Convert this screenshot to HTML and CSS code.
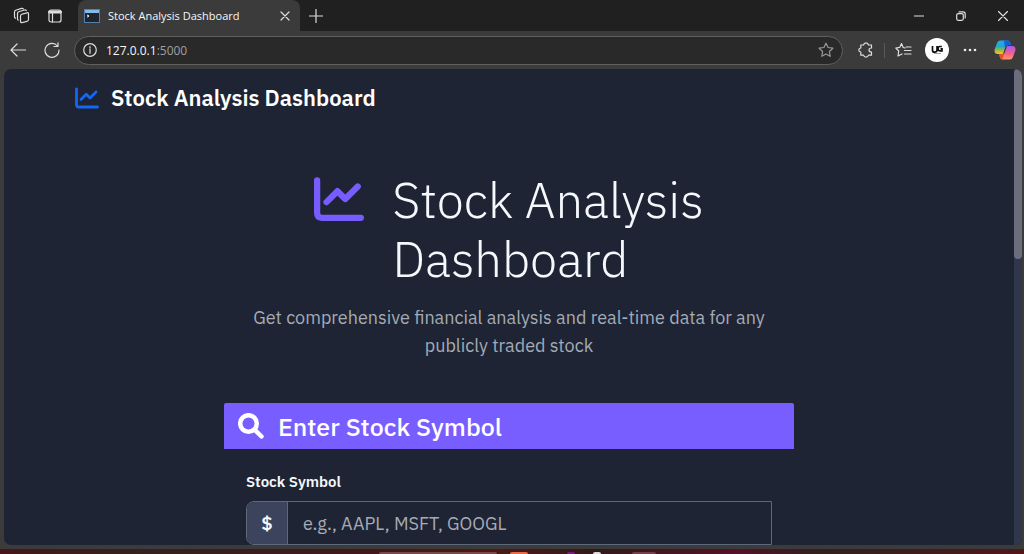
FILE: index.html
```html
<!DOCTYPE html>
<html lang="en">
<head>
<meta charset="utf-8">
<meta name="viewport" content="width=device-width, initial-scale=1">
<title>Stock Analysis Dashboard</title>
<link rel="stylesheet" href="styles.css">
</head>
<body>
<div class="browser">
  <div class="titlebar">
    <div class="title-actions">
      <button class="icon-btn" aria-label="Workspaces"><svg width="18" height="18" viewBox="0 0 18 18"><rect x="7.500" y="6.500" width="8" height="8.500" rx="1.500" transform="skewY(-14) translate(0 2.800)"/><path d="M5.200 13.200Q4.500 12.800 4.500 11.800V6.500Q4.500 5.200 5.700 4.800L11.500 3Q12.800 2.700 13.300 3.600M2.500 11.300Q1.500 10.800 1.500 9.800V5Q1.500 3.700 2.700 3.300L8.500 1.400Q9.700 1.100 10.300 1.900"/></svg></button>
      <button class="icon-btn" aria-label="Tab actions"><svg width="16" height="16" viewBox="0 0 16 16"><rect x="2" y="2" width="12" height="12" rx="2"/><path d="M2.500 4H13.500" stroke-width="3"/><path d="M5.500 5V14"/></svg></button>
    </div>
    <div class="tab">
      <svg class="favicon" width="16" height="14" viewBox="0 0 16 14"><rect x=".5" y=".5" width="15" height="13" fill="#20252d" stroke="#547eae"/><path d="M1 2.500H15" stroke="#84b9e9" stroke-width="3"/><path d="m3 6 2 1-2 1.200" stroke="#fff"/></svg>
      <span class="tab-title">Stock Analysis Dashboard</span>
      <button class="icon-btn" aria-label="Close tab"><svg width="10" height="10" viewBox="0 0 10 10"><path d="m1 1 8 8M9 1 1 9"/></svg></button>
    </div>
    <button class="icon-btn new-tab" aria-label="New tab"><svg width="14" height="14" viewBox="0 0 14 14"><path d="M7 .5V13.500M.5 7H13.500"/></svg></button>
    <div class="window-actions">
      <button class="icon-btn" aria-label="Minimize"><svg width="10" height="10" viewBox="0 0 10 10"><path d="M0 5H10"/></svg></button>
      <button class="icon-btn" aria-label="Restore"><svg width="10" height="10" viewBox="0 0 10 10"><rect x=".7" y="2.700" width="6.600" height="6.600" rx="1.500"/><path d="M3 .8H7Q9.200.8 9.200 3V7"/></svg></button>
      <button class="icon-btn" aria-label="Close"><svg width="10" height="10" viewBox="0 0 10 10"><path d="m.5.5 9 9M9.500.5l-9 9"/></svg></button>
    </div>
  </div>
  <div class="toolbar">
    <button class="icon-btn back" aria-label="Back"><svg width="16" height="14" viewBox="0 0 16 14"><path d="M15.500 7H1M7 1 1 7l6 6"/></svg></button>
    <button class="icon-btn reload" aria-label="Reload"><svg width="16" height="16" viewBox="0 0 16 16"><path d="M13.500 4A7 7 0 1 0 15 8M14 .8V4.500H10"/></svg></button>
    <div class="address">
      <svg width="14" height="14" viewBox="0 0 14 14"><circle cx="7" cy="7" r="6.300"/><path d="M7 6V10.300M7 3.500V4.800"/></svg>
      <span class="url">127.0.0.1<span class="port">:5000</span></span>
      <button class="icon-btn star" aria-label="Add to favorites"><svg width="16" height="16" viewBox="0 0 16 16"><path d="m8 1.200 2.100 4.300 4.800.7-3.500 3.300.8 4.800L8 12l-4.200 2.300.8-4.800L1.100 6.200l4.800-.7z"/></svg></button>
    </div>
    <button class="icon-btn ext" aria-label="Extensions"><svg width="16" height="16" viewBox="0 0 16 16"><path d="M5.500 3Q6 .8 8 .8T10.500 3H13.500V6Q11 6 11 8T13.500 10V13.200H10.500Q10 15.200 8 15.200T5.500 13.200H2.800V10Q.8 9.800.8 8T2.800 6V3Z"/></svg></button>
    <span class="divider"></span>
    <button class="icon-btn" aria-label="Favorites"><svg width="17" height="16" viewBox="0 0 17 16"><path d="m10 6-1.800-.5L6.500 1.500 4.800 5.300.8 6l2.900 3-.7 5L7 12M11 5h5M9.500 8.500H16M9.500 12H16"/></svg></button>
    <button class="profile" aria-label="Profile"><svg width="24" height="24" viewBox="0 0 24 24"><path d="M7.500 8v4.200q0 2 2.200 2 2.300 0 2.300-2.200V8M16.800 8.500h-2q-1.700 0-1.700 2.200t1.900 2.200h2v-2h-1.500" fill="none" stroke="#111" stroke-width="1.700"/><path d="M9 15.500h7" stroke="#777" stroke-width=".7"/></svg></button>
    <button class="icon-btn" aria-label="Settings and more"><svg width="14" height="4" viewBox="0 0 14 4"><g fill="#eee" stroke="none"><circle cx="2" cy="2" r="1.300"/><circle cx="7" cy="2" r="1.300"/><circle cx="12" cy="2" r="1.300"/></g></svg></button>
    <button class="icon-btn" aria-label="Copilot"><svg width="22" height="20" viewBox="0 0 22 20">
      <defs>
        <linearGradient id="cool" x1="0" y1="0" x2="0" y2="1"><stop offset="0" stop-color="#2aa5ee"/><stop offset=".45" stop-color="#23a9c8"/><stop offset=".75" stop-color="#a5bd32"/><stop offset="1" stop-color="#ffc51d"/></linearGradient>
        <linearGradient id="warm" x1="0" y1="0" x2="0" y2="1"><stop offset="0" stop-color="#a45df0"/><stop offset=".5" stop-color="#f05b9c"/><stop offset="1" stop-color="#ff9854"/></linearGradient>
      </defs>
      <g stroke="none"><path d="M6 .5H13.500Q16 .5 17 5H14Q12 5 11 8L9 14H4Q-.5 14 .8 9L3 3Q4 .5 6 .5Z" fill="url(#cool)"/><path d="M10 .5H13.500Q16 .5 17 5H14Q12 5 11 8Z" fill="#145ddb"/><path d="M16 19.500H8.500Q6 19.500 5.500 15H8Q10 15 11 12L13 6H18Q22.500 6 21.200 11L19 17Q18 19.500 16 19.500Z" fill="url(#warm)"/><path d="M5 14H8Q9.500 14 10 13L8.500 19.500Q6 19.500 5 14Z" fill="#e65025"/></g></svg></button>
  </div>
  <div class="viewport">
    <div class="page">
      <nav class="navbar">
        <a class="brand" href="#"><svg class="chart" width="24" height="24" viewBox="0 0 512 512"><path d="M32 64V400q0 48 48 48H480M128 288l112-112 80 80L448 128"/></svg>Stock Analysis Dashboard</a>
      </nav>
      <main class="main">
        <header class="hero">
          <svg class="chart hero-icon" width="50" height="50" viewBox="0 0 512 512"><path d="M32 64V400q0 48 48 48H480M128 288l112-112 80 80L448 128"/></svg>
          <h1>Stock Analysis<br>Dashboard</h1>
        </header>
        <p class="lead">Get comprehensive financial analysis and real-time data for any publicly traded stock</p>
        <section class="card">
          <h2 class="card-header"><svg width="26" height="26" viewBox="0 0 26 26"><circle cx="10.500" cy="10.500" r="8.300"/><path d="m16.500 16.500 7 7"/></svg>Enter Stock Symbol</h2>
          <form class="card-body">
            <label for="symbol">Stock Symbol</label>
            <div class="input-group">
              <span class="prefix">$</span>
              <input id="symbol" type="text" placeholder="e.g., AAPL, MSFT, GOOGL">
            </div>
          </form>
        </section>
      </main>
    </div>
    <div class="scrollbar"><div class="thumb"></div></div>
  </div>
  <div class="taskbar"><span class="search-edge"></span><span class="app orange"></span><span class="app purple"></span><span class="app white"></span><span class="app maroon"></span></div>
</div>
</body>
</html>
```
FILE: styles.css
```css
* { box-sizing: border-box; }
body { margin: 0; background: #3b3b3b; color: #f5f8fc; font-family: "IBM Plex Sans", "Noto Sans", sans-serif; }
button { padding: 0; border: 0; background: none; color: inherit; font: inherit; }
svg { display: block; flex: none; }
.browser { display: flex; flex-direction: column; height: 100vh; overflow: hidden; }

.titlebar, .toolbar { display: flex; align-items: center; flex: none; }
.titlebar { height: 31px; background: #202020; }
.toolbar { height: 38px; padding: 0 8px 0 10px; }
.icon-btn { display: grid; place-items: center; flex: none; }
.icon-btn svg, .address > svg { fill: none; stroke: #dedede; stroke-width: 1.2; stroke-linecap: round; stroke-linejoin: round; }
.title-actions { display: flex; gap: 16px; align-items: center; width: 78px; padding-left: 13px; }
.tab { display: flex; align-items: center; width: 222px; height: 31px; padding: 0 10px 0 6px; border-radius: 8px 8px 0 0; background: #3b3b3b; }
.tab-title { flex: 1; margin-left: 8px; font: 11px "Open Sans", sans-serif; white-space: nowrap; }
.new-tab { margin-left: 9px; }
.window-actions { display: flex; gap: 32px; margin-left: auto; padding-right: 16px; }

.reload { margin-left: 18px; }
.address { display: flex; align-items: center; flex: 1; height: 29px; margin: 0 15px 0 14px; padding: 0 8px 0 8px; border: 1px solid #606060; border-radius: 15px; background: #292929; }
.url { flex: 1; margin-left: 9px; font: 12px "Open Sans", sans-serif; }
.port { color: #a0a0a0; }
.star svg { stroke: #999; }
.divider { width: 1px; height: 15px; margin: 0 10px; background: #605653; }
.profile { width: 24px; height: 24px; margin: 0 14px 0 13px; border-radius: 50%; background: #fff; }
.profile + .icon-btn { margin-right: 17px; }

.viewport { display: flex; flex: 1; min-height: 0; margin: 0 2px 4px 4px; overflow: hidden; border-radius: 7px; background: #1e2433; }
.page { flex: 1; min-width: 0; }
.scrollbar { width: 8px; background: #30374a; }
.thumb { height: 40%; border-radius: 6px; background: #696d7c; }
.chart { fill: none; stroke: #1268f5; stroke-width: 60; stroke-linecap: round; stroke-linejoin: round; }
.navbar { padding: 12px 71px; }
.brand { display: inline-flex; align-items: center; gap: 12px; color: #fff; font-size: 22px; font-weight: 600; line-height: 34px; text-decoration: none; }
.main { max-width: 570px; margin: 43px auto 0; }
.hero { display: flex; justify-content: center; gap: 28px; }
.hero-icon { margin-top: 4px; stroke: #775cff; stroke-width: 64; }
h1 { margin: 0; font-size: 49px; font-weight: 300; line-height: 59px; }
.lead { max-width: 540px; margin: 16px auto 43px; color: #a4abb6; font-size: 18px; font-weight: 400; line-height: 28px; text-align: center; }
.card-header { display: flex; align-items: center; gap: 14px; height: 46px; margin: 0; padding: 0 14px; border-radius: 2px 2px 0 0; background: #795eff; color: #fff; font-size: 25px; font-weight: 500; }
.card-header svg { fill: none; stroke: #fff; stroke-width: 4.5; stroke-linecap: round; }
.card-body { padding: 22px; }
label { display: block; margin-bottom: 8px; font-size: 15px; font-weight: 600; line-height: 22px; }
.input-group { display: flex; height: 44px; border: 1px solid #5e687b; border-radius: 8px 0 0 8px; }
.prefix { display: grid; place-items: center; width: 41px; border-right: 1px solid #5e687b; border-radius: 7px 0 0 7px; background: #3c445d; font-size: 19px; font-weight: 600; }
input { flex: 1; min-width: 0; padding: 0 15px; border: 0; outline: 0; background: transparent; color: #fff; font-family: inherit; font-size: 18px; }
input::placeholder { color: #a6abb5; opacity: 1; }

.taskbar { display: flex; align-items: flex-end; flex: none; height: 5px; padding-left: 37%; background: linear-gradient(90deg, #461719, #352020 14%, #411719 35%, #511716 48%, #33191a 58%, #541128 72%, #30201e 80%, #501719); }
.search-edge { width: 118px; height: 2px; border-radius: 2px 2px 0 0; background: #77494b; }
.app { height: 2px; border-radius: 3px 3px 0 0; }
.orange { width: 18px; margin-left: 13px; background: #ef6845; }
.purple { width: 8px; margin-left: 39px; background: #781a8c; }
.white { width: 8px; margin-left: 18px; background: #ddd; }
.maroon { width: 24px; margin-left: 31px; background: #75404c; }
```
